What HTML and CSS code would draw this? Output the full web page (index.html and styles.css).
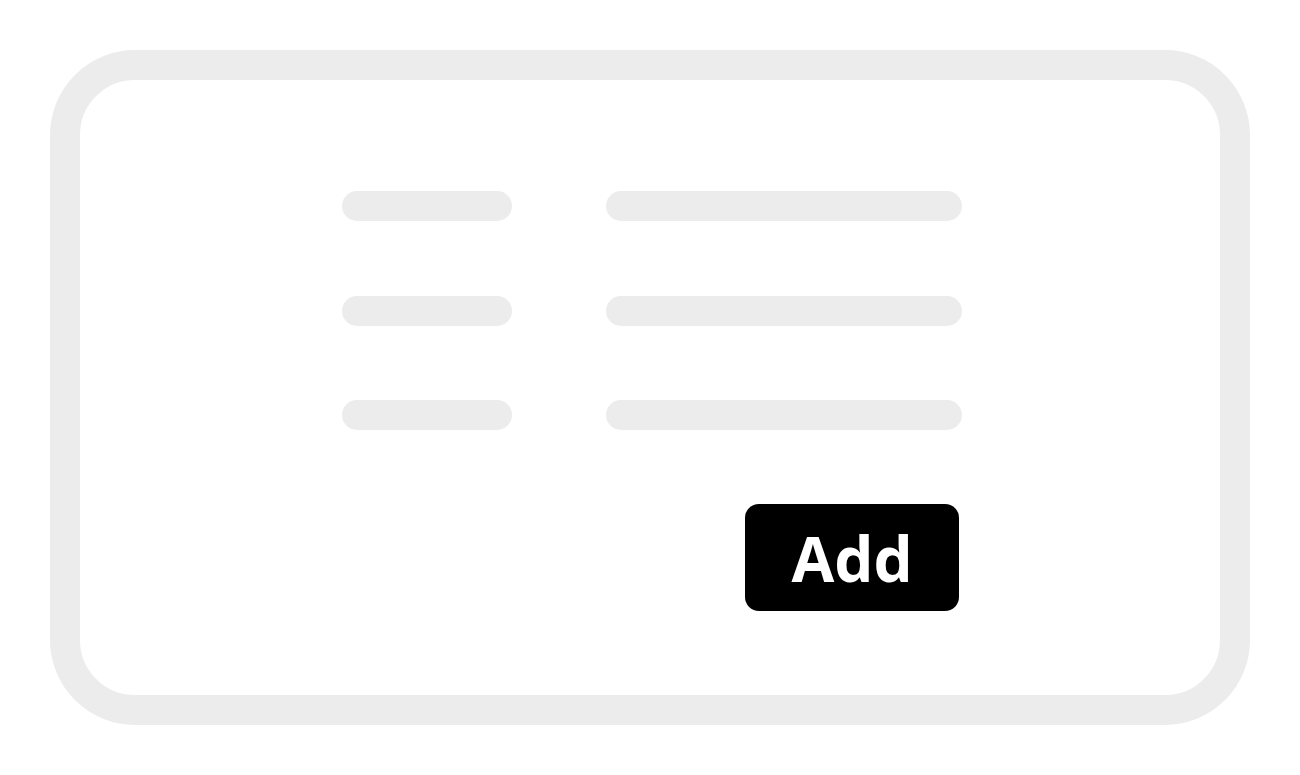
FILE: index.html
```html
<!DOCTYPE html>
<html>
<head>
<meta charset="utf-8">
<link rel="stylesheet" href="styles.css">
</head>
<body>
<div class="card">
  <div class="form">
    <div class="bar label"></div><div class="bar field"></div>
    <div class="bar label"></div><div class="bar field"></div>
    <div class="bar label"></div><div class="bar field"></div>
  </div>
  <div class="actions">
    <button class="add">Add</button>
  </div>
</div>
</body>
</html>
```

FILE: styles.css
```css
html, body {
  margin: 0;
  padding: 0;
  background: #ffffff;
}
.card {
  box-sizing: border-box;
  margin: 50px 0 0 50px;
  width: 1200px;
  height: 675px;
  border: 30px solid #ececec;
  border-radius: 85px;
  padding: 111px 0 0 262px;
}
.form {
  display: grid;
  grid-template-columns: 170px 356px;
  column-gap: 94px;
  row-gap: 74.5px;
  width: 620px;
}
.bar {
  height: 30px;
  border-radius: 15px;
  background: #ececec;
}
.actions {
  width: 617px;
  display: flex;
  justify-content: flex-end;
  margin-top: 74px;
}
.add {
  width: 214px;
  height: 107px;
  border: 0;
  border-radius: 14px;
  background: #000000;
  color: #ffffff;
  font-family: "Open Sans", "Noto Sans", sans-serif;
  font-weight: 700;
  font-size: 62px;
  line-height: 1;
  padding: 0;
  display: flex;
  align-items: center;
  justify-content: center;
}
```
